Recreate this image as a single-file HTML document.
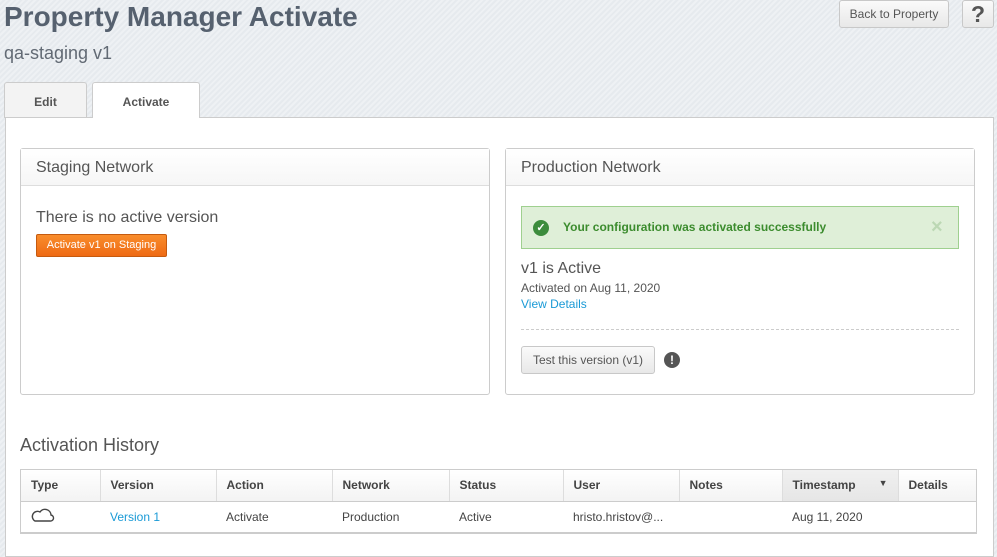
<!DOCTYPE html>
<html><head><style>
*{box-sizing:border-box;margin:0;padding:0}
body{width:997px;height:548px;overflow:hidden;font-family:"Liberation Sans",sans-serif;color:#555;position:relative;
background:repeating-linear-gradient(135deg,#eef1f4 0 2px,#e6eaee 2px 4px);}
.a{position:absolute}
h1{position:absolute;left:4px;top:1px;font-size:28px;font-weight:bold;color:#56616f;letter-spacing:0}
.sub{left:4px;top:43px;font-size:18px;color:#626a74}
.btn{border:1px solid #c8c8c8;border-radius:3px;background:linear-gradient(#fafafa,#e8e8e8);color:#555;font-size:12px;text-align:center}
.tab{border:1px solid #ccc;border-bottom:none;border-radius:3px 3px 0 0;font-size:12px;font-weight:bold;color:#555;text-align:center;line-height:38px}
.main{left:5px;top:117px;width:989px;height:440px;background:#fff;border:1px solid #ccc}
.card{border:1px solid #ccc;border-radius:3px;background:#fff}
.ch{height:37px;border-bottom:1px solid #ddd;background:linear-gradient(#fff,#f6f6f6);font-size:16px;color:#555;padding:10px 15px}
table{border-collapse:collapse;font-size:12px;color:#444}
th{text-align:left;font-weight:bold;height:31px;padding:0 10px;border-left:1px solid #ddd;background:linear-gradient(#fff,#f3f3f3);border-bottom:1px solid #ccc}
td{height:31px;padding:0 10px}
th:first-child{border-left:none}
</style></head><body>
<h1>Property Manager Activate</h1>
<div class="a sub">qa-staging v1</div>
<div class="a btn" style="left:839px;top:0;width:110px;height:28px;line-height:26px">Back to Property</div>
<div class="a btn" style="left:962px;top:0;width:32px;height:28px;line-height:26px;font-size:23px;font-weight:bold;color:#555">?</div>
<div class="a tab" style="left:4px;top:82px;width:83px;height:36px;background:#f3f3f3">Edit</div>
<div class="a main"></div>
<div class="a tab" style="left:92px;top:82px;width:108px;height:36px;background:#fff">Activate</div>

<div class="a card" style="left:20px;top:148px;width:470px;height:247px">
<div class="ch">Staging Network</div>
<div class="a" style="left:15px;top:60px;font-size:16px;color:#555">There is no active version</div>
<div class="a" style="left:15px;top:85px;width:131px;height:23px;border:1px solid #c55a0f;border-radius:2px;background:linear-gradient(#f98d2c,#ee6a14);color:#fff;font-size:11px;text-align:center;line-height:21px">Activate v1 on Staging</div>
</div>

<div class="a card" style="left:505px;top:148px;width:470px;height:247px">
<div class="ch">Production Network</div>
<div class="a" style="left:15px;top:57px;width:438px;height:43px;background:#dfefd8;border:1px solid #9fd08f">
<div class="a" style="left:11px;top:13px;width:16px;height:16px;border-radius:50%;background:#3c8c3c;color:#fff;font-size:11px;text-align:center;line-height:16px;font-weight:bold">✓</div>
<div class="a" style="left:41px;top:13px;font-size:12px;font-weight:bold;color:#3c8c2e">Your configuration was activated successfully</div>
<div class="a" style="left:409px;top:9px;font-size:20px;font-weight:bold;color:#bcd8b4">×</div>
</div>
<div class="a" style="left:15px;top:111px;font-size:16px;color:#555">v1 is Active</div>
<div class="a" style="left:15px;top:132px;font-size:12px;color:#555">Activated on Aug 11, 2020</div>
<div class="a" style="left:15px;top:148px;font-size:12px;color:#1a9ad6">View Details</div>
<div class="a" style="left:15px;top:180px;width:438px;border-top:1px dashed #ccc"></div>
<div class="a btn" style="left:15px;top:197px;width:134px;height:28px;line-height:26px">Test this version (v1)</div>
<div class="a" style="left:158px;top:203px;width:16px;height:16px;border-radius:50%;background:#555;color:#fff;font-size:12px;font-weight:bold;text-align:center;line-height:16px">!</div>
</div>

<div class="a" style="left:20px;top:435px;font-size:18px;color:#555">Activation History</div>
<div class="a" style="left:20px;top:469px;width:957px;border:1px solid #ccc;border-bottom:2px solid #ccc">
<table style="width:955px">
<tr><th style="width:79px">Type</th><th style="width:116px">Version</th><th style="width:116px">Action</th><th style="width:117px">Network</th><th style="width:114px">Status</th><th style="width:116px">User</th><th style="width:103px">Notes</th><th style="width:116px;background:linear-gradient(#f0f0f0,#e6e6e6)">Timestamp <span style="float:right;font-size:9px">▼</span></th><th>Details</th></tr>
<tr><td><svg width="24" height="16" viewBox="0 0 24 16"><path d="M4 14h15a3 3 0 0 0 1-6 6 6 0 0 0-11-3 4 4 0 0 0-5 9z" fill="none" stroke="#444" stroke-width="1.4"/></svg></td><td style="color:#1a9ad6">Version 1</td><td>Activate</td><td>Production</td><td>Active</td><td>hristo.hristov@...</td><td></td><td>Aug 11, 2020</td><td></td></tr>
</table></div>
</body></html>
